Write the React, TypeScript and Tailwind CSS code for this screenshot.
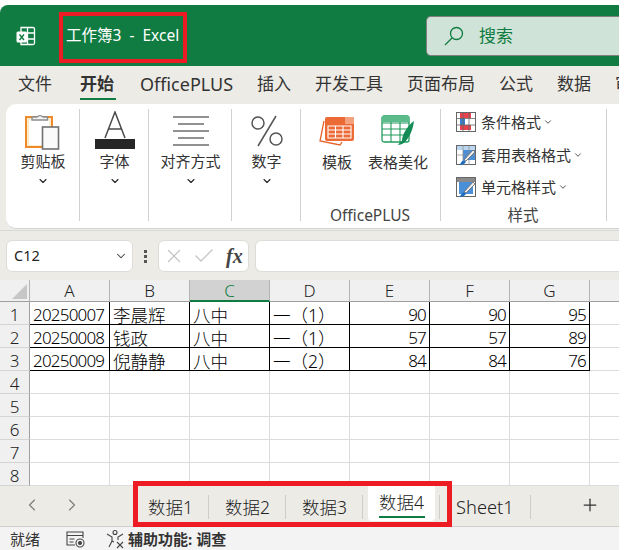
import { ChevronDown, ChevronLeft, ChevronRight, Plus, X, Check } from "lucide-react";

const CJK = "font-['Noto_Sans','Noto_Sans_CJK_SC',sans-serif]";

const menus = [
  { label: "文件", w: "w-[34px]", ml: "ml-0" },
  { label: "开始", w: "w-[36px]", ml: "ml-[28px]", active: true },
  { label: "OfficePLUS", w: "w-[93px]", ml: "ml-[24px]" },
  { label: "插入", w: "w-[34px]", ml: "ml-[24px]" },
  { label: "开发工具", w: "w-[68px]", ml: "ml-[24px]" },
  { label: "页面布局", w: "w-[68px]", ml: "ml-[24px]" },
  { label: "公式", w: "w-[34px]", ml: "ml-[24px]" },
  { label: "数据", w: "w-[34px]", ml: "ml-[24px]" },
  { label: "审阅", w: "w-[34px]", ml: "ml-[24px]" },
];

const columns = ["A", "B", "C", "D", "E", "F", "G"];

const rows = [
  ["20250007", "李晨辉", "八中", "一（1）", "90", "90", "95"],
  ["20250008", "钱政", "八中", "一（1）", "57", "57", "89"],
  ["20250009", "倪静静", "八中", "一（2）", "84", "84", "76"],
];

function ExcelLogo() {
  return (
    <svg width="22" height="22" viewBox="0 0 22 22" fill="none">
      <path d="M6 2.5h12a1.5 1.5 0 0 1 1.5 1.5v14a1.5 1.5 0 0 1-1.5 1.5H6z" stroke="#fff" strokeWidth="1.3" />
      <path d="M12.5 2.5v17M12.5 8h7M12.5 14h7" stroke="#fff" strokeWidth="1.3" />
      <rect x="1.5" y="6.5" width="10.5" height="11" rx="1.5" fill="#fff" />
      <path d="M4.5 9.5l4.5 5.5M9 9.5l-4.5 5.5" stroke="#107c41" strokeWidth="1.4" />
    </svg>
  );
}

function SearchGlass() {
  return (
    <svg width="20" height="20" viewBox="0 0 20 20" fill="none" stroke="#107c41" strokeWidth="1.300">
      <circle cx="12.500" cy="7.500" r="6" />
      <path d="M8 12L1 19" />
    </svg>
  );
}

function ClipboardIcon() {
  return (
    <svg width="36" height="40" viewBox="0 0 36 40" fill="none">
      <rect x="1" y="6" width="26" height="30" fill="#fdeccb" stroke="#ee8a2c" strokeWidth="2" />
      <rect x="4" y="9" width="20" height="25" fill="#fff" />
      <path d="M7 9V6h5a4 4 0 0 1 6 0h4.500v3z" fill="#f4f4f4" stroke="#8a8a8a" strokeWidth="1.300" />
      <rect x="17.500" y="16" width="16" height="22" fill="#fafafa" stroke="#707070" strokeWidth="1.600" />
    </svg>
  );
}

function FontIcon() {
  return (
    <svg width="40" height="40" viewBox="0 0 40 40" fill="none">
      <path d="M10 27L20 1l10 26M13.500 18h13" stroke="#4a4a4a" strokeWidth="1.500" />
      <rect x="0" y="28" width="40" height="10" fill="#262626" />
    </svg>
  );
}

function AlignIcon() {
  return (
    <svg width="36" height="30" viewBox="0 0 36 30" fill="none" stroke="#6e6e6e" strokeWidth="1.400">
      <path d="M0 1h36M5 8h26M0 15h36M5 22h26M0 29h36" />
    </svg>
  );
}

function PercentIcon() {
  return (
    <svg width="32" height="32" viewBox="0 0 32 32" fill="none" stroke="#555" strokeWidth="1.500">
      <circle cx="7" cy="8" r="6" />
      <circle cx="25" cy="24" r="6" />
      <path d="M25 1L7 31" />
    </svg>
  );
}

function TemplateIcon() {
  return (
    <svg width="36" height="30" viewBox="0 0 36 30" fill="none">
      <path d="M5 5L1 25l20 4 2-3" stroke="#e8622c" strokeWidth="1.300" />
      <rect x="6" y="1" width="29" height="24" rx="2" fill="#ec6a35" />
      <rect x="26" y="1" width="9" height="7" fill="#f4a27e" />
      <path d="M9 10h23v12H9zM9 14h23M9 18h23M16.500 10v12M24 10v12" stroke="#fff" strokeWidth="1.100" />
    </svg>
  );
}

function BeautifyIcon() {
  return (
    <svg width="34" height="32" viewBox="0 0 34 32" fill="none">
      <rect x="1" y="1" width="27" height="26" rx="2" fill="#fff" stroke="#1f9a5c" strokeWidth="1.300" />
      <path d="M1 8h27M1 14h27M1 20h27M10 1v26M19 1v26" stroke="#1f9a5c" strokeWidth="1.100" />
      <rect x="1" y="1" width="27" height="6" fill="#5cbb8b" />
      <path d="M33 6c-1 9-5 17-9 21-2 2-5 3-7 3 1-2 2-3 4-4 0-6 5-15 12-20z" fill="#148a55" />
    </svg>
  );
}

function CondIcon() {
  return (
    <svg width="20" height="20" viewBox="0 0 20 20" fill="none">
      <rect x="0.500" y="0.500" width="19" height="19" fill="#fff" stroke="#666" />
      <rect x="4" y="1" width="11" height="5" fill="#e8424f" />
      <rect x="4" y="6" width="5" height="7" fill="#3a7fcf" />
      <rect x="4" y="13" width="11" height="5" fill="#e8424f" />
      <path d="M7 0v20M13 0v20M0 6.500h20M0 13h20" stroke="#666" strokeWidth="0.800" />
    </svg>
  );
}

function TableStyleIcon({ full }: { full?: boolean }) {
  return (
    <svg width="20" height="20" viewBox="0 0 20 20" fill="none">
      <rect x="0.500" y="0.500" width="19" height="19" fill="#fff" stroke="#666" />
      <rect x="1" y="1" width="18" height="4" fill={full ? "#8a8a8a" : "#bcd6f0"} />
      <path d={full ? "M3 5h14v12H3z" : "M7 5h12v10H7z"} fill="#4a90d9" />
      {!full && <path d="M0 10h20M7 0v20M13 0v20" stroke="#888" strokeWidth="0.700" />}
      <path d="M19 7l-9 9-2-1 9-10z" fill="#eee" stroke="#666" strokeWidth="0.800" />
      <path d="M3 20c2-1 2-4 5-5l2 2c-1 2-4 3-7 3z" fill="#1f6fc0" />
    </svg>
  );
}

function Group({ width, label, children }: { width: string; label?: string; children: React.ReactNode }) {
  return (
    <div className={`${width} shrink-0 flex flex-col h-[125px] relative`}>
      <div className="flex-1 min-h-0">{children}</div>
      <div className="h-[28px] pr-[2px] text-center text-[15.500px] text-[#444] leading-[28px]">{label}</div>
      <div className="absolute right-0 top-[5px] bottom-[8px] w-px bg-[#d0d0d0]" />
    </div>
  );
}

function BigButton({ icon, label }: { icon: React.ReactNode; label: string }) {
  return (
    <div className="flex flex-col items-center h-full">
      <div className="h-[40px] mt-[7px] flex items-center justify-center">{icon}</div>
      <div className="text-[15px] leading-[20px] text-[#333] whitespace-nowrap">{label}</div>
      <ChevronDown className="mt-[4px] text-[#222]" size={12} strokeWidth={2.200} />
    </div>
  );
}

function StyleRow({ icon, label }: { icon: React.ReactNode; label: string }) {
  return (
    <div className="h-[32.500px] flex items-center pl-[15px] text-[15px] text-[#333] whitespace-nowrap">
      {icon}
      <span className="ml-[5px]">{label}</span>
      <ChevronDown className="ml-[2px]" size={10} strokeWidth={2} />
    </div>
  );
}

function ColHeader({ name }: { name: string }) {
  const selected = name === "C";
  return (
    <div
      className={`w-[80px] shrink-0 h-full flex items-center justify-center pt-[1px] text-[17px] font-light border-r border-r-[#b4b4b4] border-b ${
        selected ? "bg-[#d2d2d2] text-[#107c41] border-b-2 border-b-[#107c41]" : "bg-[#f0f0f0] text-[#222] border-b-[#9f9f9f]"
      }`}
    >
      {name}
    </div>
  );
}

function Row({ num, values }: { num: number; values?: string[] }) {
  return (
    <div className="flex h-[23px]">
      <div className="w-[30px] shrink-0 bg-[#f0f0f0] border-r border-r-[#9f9f9f] border-b border-b-[#d4d4d4] flex items-center justify-center pt-[3px] text-[17px] font-light text-[#222]">
        {num}
      </div>
      {columns.map((c, i) => (
        <div
          key={c}
          className={`w-[80px] shrink-0 border-r border-b flex items-center pt-[4px] whitespace-nowrap text-black font-light ${
            values ? "border-black" : "border-[#dcdcdc]"
          } ${i >= 4 ? "justify-end pr-[3px] text-[17px] tracking-[-0.800px]" : "pl-[3px]"} ${
            i === 0 ? "text-[17px] tracking-[-0.800px]" : ""
          } ${i > 0 && i < 4 ? "text-[17.500px]" : ""}`}
        >
          {values?.[i]}
        </div>
      ))}
      <div className="flex-1 border-b border-[#dcdcdc]" />
    </div>
  );
}

function SheetTab({ label, active, latin }: { label: string; active?: boolean; latin?: boolean }) {
  if (active) {
    return (
      <div className="w-[67px] shrink-0 h-[35px] bg-white rounded-b-[4px] flex flex-col items-center pt-[3px] text-[17.500px] text-[#222] leading-[27px] font-light">
        {label}
        <div className="w-[46px] h-[2px] bg-[#107c41]" />
      </div>
    );
  }
  return (
    <div
      className={`shrink-0 h-[24px] mt-[9px] flex items-center text-[#222] font-light pl-[16px] border-r border-[#cfcdc8] whitespace-nowrap ${
        latin ? "w-[91px] text-[18.300px]" : "w-[77px] text-[17.500px]"
      }`}
    >
      {label}
    </div>
  );
}

export default function App() {
  return (
    <div className={`${CJK} w-[624px] h-[550px] bg-white pt-[5px] pr-[5px] overflow-hidden relative`}>
      <div className="h-[61px] bg-[#107c41] rounded-tl-[8px] flex items-center">
        <div className="ml-[15px] mt-[1px]">
          <ExcelLogo />
        </div>
        <div className="ml-[29px] w-[113px] text-[15.500px] text-white whitespace-pre">工作簿3  -  Excel</div>
        <div className="ml-[247px] flex-1 h-[40px] bg-[#cfe3d8] border border-[#808080] border-r-0 rounded-l-[5px] flex items-center text-[#107c41] text-[17px]">
          <div className="ml-[17px]">
            <SearchGlass />
          </div>
          <span className="ml-[15px]">搜索</span>
        </div>
      </div>

      <div className="h-[38px] bg-[#edebe6] flex pl-[18px] overflow-hidden">
        {menus.map((m) => (
          <div
            key={m.label}
            className={`${m.w} ${m.ml} shrink-0 h-full relative flex items-center text-[#333] whitespace-nowrap pb-[2px] ${
              m.active ? "font-bold" : ""
            } ${m.label === "OfficePLUS" ? "text-[18px]" : "text-[17px]"}`}
          >
            {m.label}
            {m.active && <div className="absolute left-0 right-0 bottom-[4px] h-[2px] bg-[#107c41]" />}
          </div>
        ))}
      </div>

      <div className="bg-[#edebe6] pl-[6px] h-[126px]">
        <div className="h-[125px] bg-white rounded-l-[10px] border-b border-[#d4d4d4] flex overflow-hidden">
          <Group width="w-[74px]">
            <BigButton icon={<ClipboardIcon />} label="剪贴板" />
          </Group>
          <Group width="w-[69px]">
            <BigButton icon={<FontIcon />} label="字体" />
          </Group>
          <Group width="w-[83px]">
            <BigButton icon={<AlignIcon />} label="对齐方式" />
          </Group>
          <Group width="w-[69px]">
            <BigButton icon={<PercentIcon />} label="数字" />
          </Group>
          <Group width="w-[140px]" label="OfficePLUS">
            <div className="flex">
              <div className="w-[64px] pl-[8px] flex flex-col items-center">
                <div className="h-[40px] mt-[7px] flex items-center"><TemplateIcon /></div>
                <div className="mt-[1px] text-[15px] leading-[20px] text-[#333]">模板</div>
              </div>
              <div className="w-[66px] flex flex-col items-center">
                <div className="h-[40px] mt-[7px] flex items-center"><BeautifyIcon /></div>
                <div className="mt-[1px] text-[15px] leading-[20px] text-[#333] whitespace-nowrap">表格美化</div>
              </div>
            </div>
          </Group>
          <Group width="w-[166px]" label="样式">
            <div className="pt-[2px]">
              <StyleRow icon={<CondIcon />} label="条件格式" />
              <StyleRow icon={<TableStyleIcon />} label="套用表格格式" />
              <StyleRow icon={<TableStyleIcon full />} label="单元格样式" />
            </div>
          </Group>
        </div>
      </div>

      <div className="h-[50px] bg-[#edebe6] flex items-start pt-[9px] pl-[6px] border-t border-[#d8d8d8]">
        <div className="w-[127px] h-[32px] bg-white border border-[#dedcd8] rounded-[6px] flex items-center justify-between pl-[7px] pr-[4px] text-[14.500px] text-[#222]">
          C12
          <ChevronDown size={14} strokeWidth={1.800} className="text-[#444]" />
        </div>
        <div className="w-[25px] h-[32px] flex flex-col items-center justify-center gap-[2px]">
          <span className="w-[3px] h-[3px] bg-[#555]" />
          <span className="w-[3px] h-[3px] bg-[#555]" />
          <span className="w-[3px] h-[3px] bg-[#555]" />
        </div>
        <div className="w-[91px] h-[32px] bg-white border border-[#dedcd8] rounded-[6px] flex items-center pl-[4px] text-[#c4c4c4]">
          <X size={22} strokeWidth={1.300} />
          <Check size={24} strokeWidth={1.300} className="ml-[7px]" />
          <span className="ml-[10px] font-['Liberation_Serif',serif] italic font-bold text-[20px] leading-none text-[#444]">fx</span>
        </div>
        <div className="ml-[6px] flex-1 h-[32px] bg-white border border-[#dedcd8] rounded-l-[6px] border-r-0" />
      </div>

      <div className="bg-white">
        <div className="flex h-[22px]">
          <div className="w-[30px] shrink-0 bg-[#f0f0f0] border-r border-b border-r-[#b4b4b4] border-b-[#9f9f9f] flex items-end justify-end p-[2px]">
            <div className="w-0 h-0 border-l-[15px] border-l-transparent border-b-[15px] border-b-[#c6c6c6]" />
          </div>
          {columns.map((c) => (
            <ColHeader key={c} name={c} />
          ))}
          <div className="flex-1 bg-[#f0f0f0] border-b border-b-[#9f9f9f]" />
        </div>
        {rows.map((r, i) => (
          <Row key={r[0]} num={i + 1} values={r} />
        ))}
        {[4, 5, 6, 7, 8].map((n) => (
          <Row key={n} num={n} />
        ))}
      </div>

      <div className="h-[41px] bg-[#edebe6] border-b border-[#cfcfcf] flex text-[#7a7a7a]">
        <div className="w-[132px] shrink-0 flex items-center pl-[22px] gap-[20px] pb-[3px]">
          <ChevronLeft size={20} strokeWidth={1.300} />
          <ChevronRight size={20} strokeWidth={1.300} />
        </div>
        <SheetTab label="数据1" />
        <SheetTab label="数据2" />
        <SheetTab label="数据3" />
        <div className="w-[5px] shrink-0" />
        <SheetTab label="数据4" active />
        <div className="h-[24px] mt-[9px] border-r border-[#cfcdc8] w-[5px] shrink-0" />
        <SheetTab label="Sheet1" latin />
        <div className="flex-1 flex items-center justify-end pr-[19px] pb-[3px] text-[#333]">
          <Plus size={20} strokeWidth={1.500} />
        </div>
      </div>

      <div className="h-[24px] bg-[#f3f3f3] flex items-center text-[15px] text-[#333] pl-[10px]">
        <span>就绪</span>
        <svg className="ml-[26px]" width="20" height="18" viewBox="0 0 20 18" fill="none" stroke="#444" strokeWidth="1.100">
          <path d="M9 15H1V2h16v6M1 5.500h16M3.500 9h5M3.500 12h4" />
          <circle cx="14" cy="13" r="4" />
          <circle cx="14" cy="13" r="1.500" fill="#444" />
        </svg>
        <svg className="ml-[20px]" width="20" height="20" viewBox="0 0 20 20" fill="none" stroke="#444" strokeWidth="1.100">
          <circle cx="9" cy="3.500" r="2" />
          <path d="M1 5l5 3v4l-3 6M17 5l-5 3v3M6 12l2 1" />
          <path d="M11 13l6 6M17 13l-6 6" />
        </svg>
        <span className="ml-[2px] font-bold">辅助功能: 调查</span>
      </div>

      <div className="absolute left-[59px] top-[12px] w-[128px] h-[51px] border-[4px] border-[#ed1c24] pointer-events-none" />
      <div className="absolute left-[133px] top-[481px] w-[319px] h-[46px] border-[5px] border-[#ed1c24] pointer-events-none" />
    </div>
  );
}
